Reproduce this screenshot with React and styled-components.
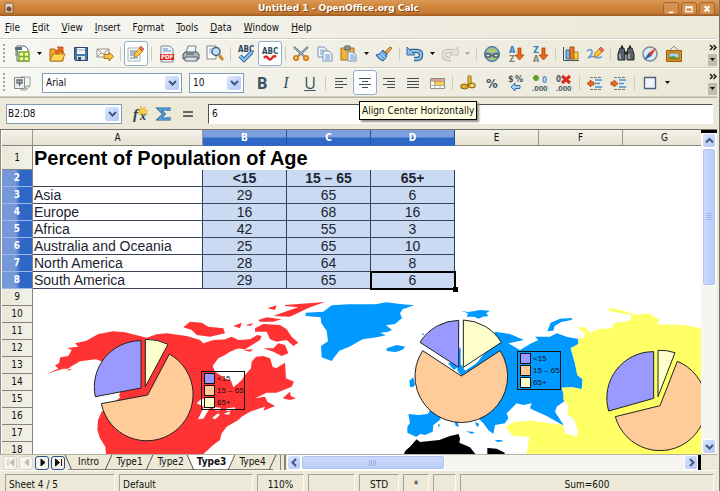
import React, { useState } from 'react';
import styled, { createGlobalStyle } from 'styled-components';

const GlobalStyle = createGlobalStyle`
  * { box-sizing: border-box; }
  body { margin: 0; }
  button, input, select { font: inherit; color: inherit; }
`;

const Window = styled.div`
  display: flex;
  flex-direction: column;
  height: 100vh;
  padding-right: 2px;
  border-right: 1px solid #77766e;
  background: #ece9d8;
  color: #111;
  font-family: 'DejaVu Sans Condensed', 'DejaVu Sans', sans-serif;
  font-size: 10px;
  line-height: 14px;
  overflow: hidden;
`;

const TitleBar = styled.header`
  display: flex;
  align-items: center;
  flex: none;
  height: 16px;
  margin-right: -2px;
  padding: 0 4px;
  background: linear-gradient(#dc9a58, #cf863c 40%, #c87c33 80%, #9a5a20);
  color: #fff;
`;

const Title = styled.h1`
  flex: 1;
  margin: 0;
  text-align: center;
  font-family: 'DejaVu Sans', sans-serif;
  font-size: 9px;
  line-height: 14px;
  font-weight: bold;
  text-shadow: 1px 1px 1px #6e4014;
`;

const TitleButtons = styled.div`
  display: flex;
  gap: 2px;
`;

const TitleButton = styled.button`
  display: flex;
  width: 16px;
  height: 13px;
  padding: 0;
  border: 1px solid #a5662c;
  border-radius: 3px;
  background: #d3904e;
`;

const MenuBar = styled.nav`
  display: flex;
  flex: none;
  gap: 12px;
  height: 23px;
  padding: 5px 5px 0;
  background: linear-gradient(90deg, #f7f7f5, #eeece0 60%, #ece9d8);
  border-bottom: 1px solid #d2cfc0;
`;

const MenuItem = styled.button`
  padding: 0;
  border: none;
  background: none;
  line-height: 14px;
  height: 14px;
`;

const Bar = styled.div`
  display: flex;
  align-items: center;
  flex: none;
  height: 29px;
  padding-left: 3px;
  background: linear-gradient(90deg, #f7f7f3, #efede2 60%, #ece9d8);
  border-top: 1px solid #fff;
  border-bottom: 1px solid #d0cdbe;
`;

const Handle = styled.span`
  width: 2px;
  height: 20px;
  margin-right: 5px;
  background: repeating-linear-gradient(#a9a79b 0 2px, transparent 2px 4px);
`;

const ToolButton = styled.button`
  display: flex;
  align-items: center;
  justify-content: center;
  flex: none;
  width: 24px;
  height: 25px;
  padding: 0;
  border: 1px solid ${p => (p.$active ? '#8eb0cc' : 'transparent')};
  border-radius: 3px;
  background: ${p => (p.$active ? '#fff' : 'none')};
`;

const Letter = styled.span`
  color: #3a5462;
  font-family: ${p => p.$font || "'Open Sans', sans-serif"};
  font-size: 16px;
  line-height: 22px;
  font-weight: ${p => (p.$bold ? 'bold' : 'normal')};
  font-style: ${p => (p.$italic ? 'italic' : 'normal')};
  text-decoration: ${p => (p.$underline ? 'underline' : 'none')};
`;

const DropButton = styled.button`
  display: flex;
  align-items: center;
  justify-content: center;
  width: 11px;
  height: 24px;
  padding: 0;
  border: none;
  background: none;
`;

const Separator = styled.span`
  width: 1px;
  height: 14px;
  margin: 0 3px;
  background: #cfccbd;
`;

const Overflow = styled.div`
  display: flex;
  flex-direction: column;
  align-items: center;
  justify-content: space-between;
  width: 9px;
  height: 25px;
  margin-left: auto;
`;

const OverflowButton = styled.button`
  display: flex;
  align-items: center;
  justify-content: center;
  width: 9px;
  height: 12px;
  padding: 0;
  border: none;
  background: ${p => (p.$filled ? '#bebbb0' : 'none')};
`;

const Combo = styled.div`
  display: flex;
  align-items: center;
  position: relative;
  width: ${p => p.$width};
  height: 20px;
  margin: ${p => p.$margin || '0'};
  border: 1px solid #7f9db9;
  background: #fff;
`;

const ComboField = styled.select`
  appearance: none;
  width: 100%;
  height: 18px;
  padding: 0 18px 0 3px;
  border: none;
  outline: none;
  background: none;
`;

const NameField = styled(ComboField).attrs({ as: 'input' })`
  padding: 0 0 0 1px;
`;

const ComboArrow = styled.span`
  position: absolute;
  right: 2px;
  display: flex;
  align-items: center;
  justify-content: center;
  width: 14px;
  height: 14px;
  border-radius: 2px;
  background: linear-gradient(135deg, #dce7ff, #b4c8f6);
  pointer-events: none;
`;

const FormulaBar = styled.div`
  display: flex;
  align-items: center;
  flex: none;
  height: 32px;
  padding: 0 4px 0 6px;
  border-top: 1px solid #b9b6a6;
  background: #ece9d8;
`;

const FormulaInput = styled.input`
  flex: 1;
  min-width: 0;
  height: 20px;
  margin-left: 8px;
  padding: 0 3px;
  border: 1px solid #fff;
  border-top-color: #55544f;
  border-left-color: #55544f;
  background: #fff;
  outline: none;
`;

const Tooltip = styled.div`
  position: absolute;
  z-index: 5;
  top: 31px;
  left: 6px;
  padding: 1px 2px;
  border: 1px solid #000;
  background: #ffffe1;
  box-shadow: 2px 2px 2px #8f8e84;
  white-space: nowrap;
  line-height: 15px;
`;

const TooltipAnchor = styled.span`
  position: relative;
  display: flex;
`;

const Workspace = styled.main`
  display: flex;
  flex: 1;
  min-height: 0;
  border-top: 1px solid #77756b;
`;

const SheetView = styled.div`
  position: relative;
  flex: 1;
  min-width: 0;
  overflow: hidden;
  padding-left: 1px;
  background: #fff;
  border-left: 1px solid #8d8b80;
`;

const Grid = styled.table`
  width: 705px;
  table-layout: fixed;
  border-collapse: separate;
  border-spacing: 0;
  font-family: 'Liberation Sans', Arial, sans-serif;
  font-size: 14px;
  line-height: 15px;
`;

const ColumnHead = styled.th`
  height: 16px;
  padding: 0;
  border-right: 1px solid ${p => (p.$selected ? '#24529f' : '#9b998d')};
  border-bottom: 1px solid ${p => (p.$selected ? '#316ac5' : '#85837a')};
  background: ${p => (p.$selected ? 'linear-gradient(#7e9fdd 45%, #2f67c6 55%)' : 'linear-gradient(#f3f2ea, #e6e3d3)')};
  color: ${p => (p.$selected ? '#fff' : '#111')};
  font-family: 'DejaVu Sans Condensed', sans-serif;
  font-size: 10px;
  line-height: 14px;
  font-weight: ${p => (p.$selected ? 'bold' : 'normal')};
`;

const RowHead = styled(ColumnHead)`
  height: ${p => p.$height || 17}px;
  border-right-color: #85837a;
  border-bottom-color: ${p => (p.$selected ? '#9db9e6' : '#85837a')};
  background: ${p => (p.$selected ? 'linear-gradient(90deg, #7599d8 45%, #2f67c6 60%)' : 'linear-gradient(90deg, #e9e6d8, #f3f2ea)')};
`;

const Cell = styled.td`
  height: 17px;
  padding: 0 1px;
  overflow: hidden;
  white-space: nowrap;
  border-right: 1px solid ${p => (p.$plain ? 'transparent' : '#2c3f63')};
  border-bottom: 1px solid ${p => (p.$plain ? 'transparent' : '#3a4457')};
  background: ${p => (p.$selected ? '#cadaf3' : '#fff')};
  text-align: ${p => (p.$selected ? 'center' : 'left')};
  font-weight: ${p => (p.$bold ? 'bold' : 'normal')};
  color: #1c2430;
`;

const CursorCell = styled(Cell)`
  position: relative;
  overflow: visible;
  outline: 2px solid #000;
  outline-offset: -1px;

  &::after {
    content: '';
    position: absolute;
    right: -4px;
    bottom: -4px;
    width: 5px;
    height: 5px;
    background: #000;
  }
`;

const HeadingCell = styled(Cell)`
  height: 24px;
  font-size: 20px;
  line-height: 22px;
  font-weight: bold;
  color: #000;
`;

const Drawing = styled.svg`
  position: absolute;
  left: 32px;
  top: 160px;
`;

const Legend = styled.ul`
  position: absolute;
  left: ${p => p.$x}px;
  top: ${p => p.$y}px;
  display: flex;
  flex-direction: column;
  justify-content: space-around;
  width: 44px;
  height: 39px;
  margin: 0;
  padding: 1px 2px;
  border: 1px solid #111;
  list-style: none;
  font-family: 'Liberation Sans', Arial, sans-serif;
  font-size: 8px;
  line-height: 9px;
`;

const LegendItem = styled.li`
  display: flex;
  align-items: center;
  gap: 2px;
  white-space: nowrap;

  &::before {
    content: '';
    flex: none;
    width: 9px;
    height: 9px;
    border: 1px solid #111;
    background: ${p => p.$color};
  }
`;

const VScroll = styled.div`
  display: flex;
  flex-direction: column;
  flex: none;
  width: 16px;
  padding: 0 1px;
  border-top: 3px solid #000;
  background: #f6f5f1;
`;

const ScrollButton = styled.button`
  display: flex;
  align-items: center;
  justify-content: center;
  flex: none;
  width: 14px;
  height: 15px;
  padding: 0;
  border: 1px solid #fff;
  border-radius: 3px;
  background: linear-gradient(135deg, #d7e2fd, #b4c8f6);
`;

const Thumb = styled.div`
  display: flex;
  align-items: center;
  justify-content: center;
  flex: ${p => p.$grow};
  border: 1px solid #fff;
  border-radius: 3px;
  background: linear-gradient(${p => (p.$vertical ? '90deg' : '180deg')}, #cbdafd, #b9cbf8);
  box-shadow: inset 0 0 0 1px #b2c4ee;
`;

const Track = styled.div`
  flex: ${p => p.$grow};
`;

const TabRow = styled.div`
  display: flex;
  align-items: stretch;
  flex: none;
  height: 16px;
  border-top: 1px solid #b5b2a4;
  background: #ece9d8;
`;

const TabNav = styled.div`
  display: flex;
  align-items: center;
  gap: 2px;
  padding: 0 3px 0 3px;
`;

const NavButton = styled.button`
  display: flex;
  align-items: center;
  justify-content: center;
  width: 14px;
  height: 14px;
  padding: 0;
  border: 1px solid ${p => (p.disabled ? '#d8d5c7' : '#2b4f83')};
  border-radius: 3px;
  background: #f4f3ee;
`;

const Tabs = styled.div`
  display: flex;
  flex: none;
  padding-right: 7px;
  border-right: 1px solid #85837a;
`;

const Tab = styled.button`
  position: relative;
  z-index: ${p => (p.$active ? 0 : 1)};
  width: 41px;
  height: 15px;
  padding: 0;
  border: none;
  border-bottom: 1px solid #85837a;
  background: none;
  line-height: 14px;
  font-weight: ${p => (p.$active ? 'bold' : 'normal')};

  &::before {
    content: '';
    position: absolute;
    z-index: -1;
    inset: 0 -3px;
    background: ${p => (p.$active ? '#fff' : 'none')};
    clip-path: polygon(0 0, 100% 0, calc(100% - 6px) 100%, 6px 100%);
  }

  &::after {
    content: '';
    position: absolute;
    top: 0;
    right: 0;
    height: 15px;
    border-right: 1px solid #55534c;
    transform: skewX(${p => (p.$beforeActive ? '24deg' : '-24deg')});
  }
`;

const TabEdge = styled.span`
  width: 1px;
  height: 15px;
  margin: 0 -1px 0 0;
  z-index: 1;
  background: #55534c;
  transform: skewX(24deg);
`;

const Splitter = styled.div`
  width: 5px;
  margin: 0 1px 0 0;
  border-right: 2px solid #85837a;
`;

const HScroll = styled.div`
  display: flex;
  flex: 1;
  min-width: 0;
  background: #f6f5f1;
  border-right: 3px solid #000;
`;

const Corner = styled.div`
  width: 16px;
`;

const StatusBar = styled.footer`
  display: flex;
  flex: none;
  gap: 4px;
  height: 21px;
  padding: 3px 3px 0 5px;
  border-top: 1px solid #fbfaf6;
`;

const StatusField = styled.div`
  flex: ${p => `${p.$size} 1 ${p.$size}px`};
  padding: 3px 3px 0;
  border: 1px solid #fbfaf5;
  border-top-color: #a5a294;
  border-left-color: #a5a294;
  border-bottom: none;
  text-align: ${p => (p.$center ? 'center' : 'left')};
  white-space: nowrap;
`;

const Svg = ({ size = 18, children }) => (
    <svg width={size} height={size} viewBox="0 0 18 18" fill="none" aria-hidden="true">{children}</svg>
);

const Chevron = ({ dir = 'down' }) => {
    const paths = {
        down: 'M1 3l3.5 3.5L8 3',
        up: 'M1 6.5L4.500 3 8 6.500',
        left: 'M6 1L2.500 4.500 6 8',
        right: 'M3 1l3.500 3.500L3 8',
    };
    return <svg width="9" height="9" viewBox="0 0 9 9" aria-hidden="true"><path d={paths[dir]} fill="none" stroke="#41587f" strokeWidth="2" /></svg>;
};

const Triangle = ({ color = '#111' }) => (
    <svg width="5" height="4" viewBox="0 0 5 4" aria-hidden="true"><path d="M0 0h5L2.500 3z" fill={color} /></svg>
);

const More = () => (
    <svg width="8" height="7" viewBox="0 0 8 7" aria-hidden="true"><path d="M1 1l2.500 2.500L1 6M4.500 1L7 3.500 4.500 6" fill="none" stroke="#111" strokeWidth="1.400" /></svg>
);

const iconFont = { fontFamily: 'DejaVu Sans Condensed', fontWeight: 'bold' };

const icons = {
    new: <><path d="M4 1h8l3 3v12H4z" fill="#fff" stroke="#62696b" /><path d="M2 2h7v3H2z" fill="#4f6e80" /><path d="M3 3h5M2 6h3M2 8h3M2 10h3" stroke="#5f7a88" /><path d="M6 7h10v9H6z" fill="#f8ffa0" stroke="#78a82c" strokeWidth="1.500" /><path d="M6 11.500h10M11 7v9" stroke="#78a82c" strokeWidth="1.500" /></>,
    open: <><path d="M2 16V4h5l1 2h7v10z" fill="#f0a52c" stroke="#b26b10" /><path d="M2 16l3-7h12l-3 7z" fill="#ffd65c" stroke="#b9781a" /><path d="M7 7l4-4-2-1h6v6l-2-2-4 3z" fill="#ee6a1a" stroke="#a53c08" strokeWidth=".7" /></>,
    save: <><path d="M2.500 2.500h13v13h-12l-1-1z" fill="#4679a6" stroke="#274a6c" /><path d="M5 3h8v6H5z" fill="#f2f6fa" /><path d="M5 5h8" stroke="#9ab4cc" /><path d="M5 11h8v4H5z" fill="#d7dde2" /><path d="M6 12h3v3H6z" fill="#35526d" /></>,
    mail: <><path d="M1 4h12v8H1z" fill="#fbfaf2" stroke="#95938a" /><path d="M1 4l6 5 6-5M1 12l4-4M13 12L9 8" stroke="#95938a" /><path d="M8 9.500h5V7l4.500 4.500L13 16v-2.500H8z" fill="#fbc343" stroke="#ad7410" /></>,
    edit: <><path d="M1 3h12v13H1z" fill="#f9fbfd" stroke="#a5b2bb" /><path d="M3 6h7M3 8h6M3 10h5M3 13h8" stroke="#5b7c95" /><path d="M7 12l1-4 5-5 3 3-5 5z" fill="#fbc63c" stroke="#a9741a" strokeWidth=".8" /><path d="M12 3l2-2 3 3-2 2z" fill="#ef6b5b" stroke="#b23b2b" strokeWidth=".6" /></>,
    pdf: <><path d="M3 1h9l3 3v13H3z" fill="#eff4f8" stroke="#7b8a94" /><path d="M5 4h5M5 6h8" stroke="#5a8fc0" /><rect x="2" y="9" width="14" height="6" fill="#dc2418" /><text x="3" y="14" fontSize="6" fill="#fff" style={iconFont}>PDF</text></>,
    print: <><path d="M6 1h8l-1 7H4z" fill="#f2f7fb" stroke="#758490" /><path d="M1 9l2-2h12l2 2v5H1z" fill="#a9b4bb" stroke="#4b565c" /><path d="M3 12h12v4H3z" fill="#dbe1e4" stroke="#5b666c" /><path d="M4 9h8" stroke="#4b565c" /></>,
    preview: <><path d="M1 1h9v13H1z" fill="#fff" stroke="#78858d" /><path d="M3 4h5M3 6h3M3 8h3" stroke="#8cb3d6" /><circle cx="10" cy="6.500" r="4" fill="#bfe0f8" stroke="#4a6478" strokeWidth="1.500" /><path d="M13 10l4 5" stroke="#d08a2c" strokeWidth="3" /></>,
    spell: <><text x="1" y="7" fontSize="8" fill="#2d4a5c" style={iconFont}>ABC</text><path d="M3 11l4 4 8-8" stroke="#24649c" strokeWidth="4" /><path d="M3 11l4 4 8-8" stroke="#8dc4ee" strokeWidth="2" /></>,
    autospell: <><text x="1" y="9" fontSize="8" fill="#2d4a5c" style={iconFont}>ABC</text><path d="M3 13q2-3 4 0t4 0 4-1" stroke="#e02a20" strokeWidth="2.500" /></>,
    cut: <><path d="M2 2l11 10M16 2L5 12" stroke="#5d686e" strokeWidth="2.200" /><path d="M2.500 2.500l10 9M15.500 2.500l-10 9" stroke="#cdd6da" strokeWidth=".8" /><circle cx="4" cy="13" r="2" stroke="#dc8018" strokeWidth="2.200" /><circle cx="14" cy="13" r="2" stroke="#dc8018" strokeWidth="2.200" /></>,
    copy: <><path d="M2 2h6l3 3v7H2z" fill="#f4f8fd" stroke="#7390b4" /><path d="M4 5h4M4 7h5M4 9h5" stroke="#7fa6d4" /><path d="M7 6h6l3 3v7H7z" fill="#f4f8fd" stroke="#7390b4" /><path d="M9 10h5M9 12h5M9 14h5" stroke="#5e90cc" /></>,
    paste: <><path d="M1 3h13v12H1z" fill="#f3b23c" stroke="#a76c14" /><path d="M5 1h5v4H5z" fill="#8d9ba3" stroke="#56626a" /><path d="M8 7h5l3 3v6H8z" fill="#f4f8fd" stroke="#7390b4" /><path d="M10 10h4M10 12h5M10 14h5" stroke="#5e90cc" /></>,
    brush: <><path d="M10 7l5-5 2 1-5 6z" fill="#f5a93a" stroke="#a86912" /><path d="M8 5l4 5q-1 4-4 6-4-1-7-6 4 0 7-5z" fill="#6aa6e0" stroke="#285f9c" /><path d="M4 10l3 4M6 8l4 5" stroke="#d6eafc" /></>,
    undo: <><path d="M4 6h7q4 0 4 4t-4 4H8" stroke="#35679c" strokeWidth="4.500" /><path d="M1 2v8h8z" fill="#8fbde8" stroke="#35679c" /><path d="M5 6h6q4 0 4 4t-4 4H8" stroke="#8fbde8" strokeWidth="2.200" /></>,
    redo: <><path d="M13 6H7q-4 0-4 4t4 4h3" stroke="#c4c3bb" strokeWidth="4.500" /><path d="M17 2v8H9z" fill="#e7e6dd" stroke="#c4c3bb" /><path d="M13 6H7q-4 0-4 4t4 4h3" stroke="#e7e6dd" strokeWidth="2.200" /></>,
    link: <><circle cx="9" cy="9" r="7.500" fill="#6aa0cf" stroke="#4b7088" /><path d="M3 6q6-6 12 0l-4 2H7zM4 13q5 4 10 0l-3-1H7z" fill="#b3c66c" /><path d="M3 9h4v3H3zM11 9h4v3h-4z" fill="#eef2df" stroke="#4f606b" strokeWidth="1.300" /><path d="M7 10.500h4" stroke="#4f606b" strokeWidth="1.500" /></>,
    sortAsc: <><text x="2" y="8" fontSize="9" fill="#3480c8" style={iconFont}>A</text><text x="2" y="17" fontSize="9" fill="#84857f" style={iconFont}>Z</text><path d="M11 3h3v7h3l-4.500 5L8 10h3z" fill="#ec6a1c" stroke="#ab3d08" strokeWidth=".8" /></>,
    sortDesc: <><text x="2" y="8" fontSize="9" fill="#3480c8" style={iconFont}>Z</text><text x="2" y="17" fontSize="9" fill="#84857f" style={iconFont}>A</text><path d="M11 3h3v7h3l-4.500 5L8 10h3z" fill="#ec6a1c" stroke="#ab3d08" strokeWidth=".8" /></>,
    chart: <><path d="M1.500 2v13.500H17" stroke="#42505c" /><path d="M4 5h4v9H4z" fill="#7fb5e6" stroke="#2f6497" /><path d="M8 2h4v12H8z" fill="#ee7b2b" stroke="#a84a0c" /><path d="M12 7h4v7h-4z" fill="#fbd44c" stroke="#a8820c" /></>,
    draw: <><path d="M1 6q4-3 5 0t-4 7q6-3 9 0l5-1" stroke="#5f9be0" strokeWidth="1.600" /><path d="M8 12l1-4 5-5 3 3-5 5z" fill="#fbc63c" stroke="#a9741a" strokeWidth=".8" /><path d="M13 4l2-2 3 3-2 2z" fill="#ef6b5b" stroke="#b23b2b" strokeWidth=".6" /></>,
    find: <><path d="M3 3h4l1 5v7H1V9zM11 3h4l2 6v6h-7V8z" fill="#596067" stroke="#24292d" /><path d="M4 2h2M12 2h2M7 8h4" stroke="#24292d" strokeWidth="3" /><path d="M3 9v5M12 9v5" stroke="#b4bcc2" strokeWidth="1.500" /></>,
    compass: <><circle cx="9" cy="9" r="7" fill="#dcebf8" stroke="#7c8c9a" strokeWidth="1.500" /><path d="M15 3l-4.500 8-3-3z" fill="#e23a28" /><path d="M3 15l4.500-7 3 3z" fill="#2c5f9c" /></>,
    gallery: <><path d="M5 5l4-4 4 4" stroke="#8b8b84" /><path d="M1.500 5.500h15v11h-15z" fill="#d98d22" stroke="#9c5c0c" /><path d="M4 8h10v6H4z" fill="#9fd2f4" stroke="#8d5a10" strokeWidth=".7" /><path d="M4 14v-2l4-1 6 2v1z" fill="#5d9a34" /></>,
    styles: <><path d="M8 3h9v9l-4 4H8z" fill="#f3f3f0" stroke="#9a9d9f" /><path d="M17 12h-4v4" stroke="#9a9d9f" /><path d="M1.500 3.500h10v11h-10z" fill="#eceeef" stroke="#858b8f" /><path d="M4 6h5v3H4zM6.500 6v6" stroke="#5d676e" strokeWidth="1.300" /></>,
    currency: <><path d="M9 2q4-1 3 2v8H9z" fill="#f0bd38" stroke="#99700f" /><path d="M2 11q3-2 7 0v3q-4 2-7 0z" fill="#e7a92b" stroke="#865c0a" /><path d="M10 10q4-2 6 0v3q-3 2-6 0z" fill="#f7d264" stroke="#865c0a" /></>,
    percent: <text x="3" y="14" fontSize="13" fill="#405662" style={iconFont}>%</text>,
    standard: <><text x="1" y="8" fontSize="9" fill="#405662" style={iconFont}>$</text><text x="8" y="8" fontSize="9" fill="#405662" style={iconFont}>%</text><path d="M4 13l4-4v2.500h5v3H8V17z" fill="#a7d0f4" stroke="#2f70ac" /></>,
    addDecimal: <><path d="M2 4h6M5 1v6" stroke="#5d9e22" strokeWidth="3" /><text x="11" y="9" fontSize="8" fill="#4f93dc" style={iconFont}>0</text><text x="1" y="17" fontSize="8" fill="#405662" style={{ fontFamily: 'Liberation Sans', fontWeight: 'bold' }}>.000</text></>,
    delDecimal: <><text x="1" y="8" fontSize="8" fill="#405662" style={iconFont}>0</text><text x="1" y="17" fontSize="8" fill="#405662" style={{ fontFamily: 'Liberation Sans', fontWeight: 'bold' }}>.000</text><path d="M7 2l8 7M15 2L7 9" stroke="#d92a1c" strokeWidth="3" /></>,
    outdent: <><path d="M4 3.500h12M4 15.500h12" stroke="#6d787e" strokeDasharray="3 1" /><path d="M9 6h7M9 9.500h5M9 13h7" stroke="#4596d8" strokeWidth="1.600" /><path d="M1 9.500l4-3.500v2h3v3H5v2z" fill="#ec6a1c" stroke="#a23d0b" strokeWidth=".7" /></>,
    indent: <><path d="M4 3.500h12M4 15.500h12" stroke="#6d787e" strokeDasharray="3 1" /><path d="M9 6h7M9 9.500h5M9 13h7" stroke="#4596d8" strokeWidth="1.600" /><path d="M8 9.500L4 6v2H1v3h3v2z" fill="#ec6a1c" stroke="#a23d0b" strokeWidth=".7" /></>,
    borders: <path d="M3.500 3.500h11v11h-11z" fill="#f1f5fb" stroke="#4d6480" strokeWidth="1.400" />,
    left: <path d="M3 4.500h12M3 7.500h8M3 10.500h12M3 13.500h8" stroke="#444c50" strokeWidth="1.200" />,
    center: <path d="M3 4.500h12M6 7.500h6M3 10.500h12M6 13.500h6" stroke="#444c50" strokeWidth="1.200" />,
    right: <path d="M3 4.500h12M7 7.500h8M3 10.500h12M7 13.500h8" stroke="#444c50" strokeWidth="1.200" />,
    justify: <path d="M3 4.500h12M3 7.500h12M3 10.500h12M3 13.500h12" stroke="#444c50" strokeWidth="1.200" />,
    merge: <><path d="M2.500 4.500h14v10h-14z" fill="#fff" stroke="#8b8f93" /><path d="M3 5h13v2H3z" fill="#efa184" /><path d="M6 7h10v4H6z" fill="#fbd144" /><path d="M2 7.500h15M2 11.500h15M7 5v10M12 5v2M12 11v4" stroke="#95999c" strokeWidth=".8" /></>,
    fx: <><path d="M10 1l1 3 3-2-1 3h4l-3 2 3 2H7z" fill="#f8cf4a" stroke="#dcae28" strokeWidth=".6" /><text x="2" y="14" fontSize="15" fill="#28414f" style={{ fontFamily: 'Liberation Serif', fontStyle: 'italic', fontWeight: 'bold' }}>f</text><text x="9" y="15" fontSize="12" fill="#28414f" style={{ fontFamily: 'Liberation Serif', fontStyle: 'italic', fontWeight: 'bold' }}>x</text></>,
    sum: <><path d="M14 6V4H4l5 5-5 5h10v-2" stroke="#1d5a96" strokeWidth="3" /><path d="M14 6V4H4l5 5-5 5h10v-2" stroke="#5eabea" strokeWidth="1.400" /></>,
    equals: <path d="M4 7h10M4 11h10" stroke="#64686a" strokeWidth="2" />,
};

const letters = {
    bold: <Letter $bold>B</Letter>,
    italic: <Letter $font="'Liberation Serif', serif" $italic>I</Letter>,
    underline: <Letter $underline>U</Letter>,
};

const standardBar = [
    ['new', 'New', 'drop'], ['open', 'Open'], ['save', 'Save'], ['mail', 'Document as E-mail'], '|',
    ['edit', 'Edit File', 'on'], '|',
    ['pdf', 'Export as PDF'], ['print', 'Print'], ['preview', 'Page Preview'], '|',
    ['spell', 'Spellcheck'], ['autospell', 'AutoSpellcheck', 'on'], '|',
    ['cut', 'Cut'], ['copy', 'Copy'], ['paste', 'Paste', 'drop'], ['brush', 'Format Paintbrush'], '|',
    ['undo', 'Undo', 'drop'], ['redo', 'Redo', 'dropOff'], '|',
    ['link', 'Hyperlink'], ['sortAsc', 'Sort Ascending'], ['sortDesc', 'Sort Descending'], '|',
    ['chart', 'Insert Chart'], ['draw', 'Show Draw Functions'], '|',
    ['find', 'Find & Replace'], ['compass', 'Navigator'], ['gallery', 'Gallery'],
];

const formatBar = [
    ['bold', 'Bold'], ['italic', 'Italic'], ['underline', 'Underline'], '|',
    ['left', 'Align Left'], ['center', 'Align Center Horizontally', 'tip'], ['right', 'Align Right'], ['justify', 'Justified'], ['merge', 'Merge Cells'], '|',
    ['currency', 'Number Format: Currency'], ['percent', 'Number Format: Percent'], ['standard', 'Number Format: Standard'], ['addDecimal', 'Add Decimal Place'], ['delDecimal', 'Delete Decimal Place'], '|',
    ['outdent', 'Decrease Indent'], ['indent', 'Increase Indent'], '|',
    ['borders', 'Borders', 'drop'],
];

const Tools = ({ items }) => items.map((item, index) => {
    if (item === '|') {
        return <Separator key={index} />;
    }
    const [name, label, mode] = item;
    return (
        <React.Fragment key={name}>
            <TooltipAnchor>
                <ToolButton type="button" aria-label={label} $active={mode === 'on' || mode === 'tip'}>
                    {letters[name] || <Svg>{icons[name]}</Svg>}
                </ToolButton>
                {mode === 'tip' && <Tooltip role="tooltip">{label}</Tooltip>}
            </TooltipAnchor>
            {mode?.startsWith('drop') && (
                <DropButton type="button" aria-label={`${label} options`}><Triangle color={mode === 'dropOff' ? '#aaa89c' : '#111'} /></DropButton>
            )}
        </React.Fragment>
    );
});

const BarOverflow = () => (
    <Overflow>
        <OverflowButton type="button" aria-label="More controls"><More /></OverflowButton>
        <OverflowButton type="button" aria-label="Toolbar menu" $filled><Triangle /></OverflowButton>
    </Overflow>
);

const menus = ['File', 'Edit', 'View', 'Insert', 'Format', 'Tools', 'Data', 'Window', 'Help'];
const accessKeys = { Format: 1 };

const MenuLabel = ({ text }) => {
    const at = accessKeys[text] || 0;
    return <>{text.slice(0, at)}<u>{text[at]}</u>{text.slice(at + 1)}</>;
};

const columns = ['A', 'B', 'C', 'D', 'E', 'F', 'G'];
const rows = [
    ['', '<15', '15 – 65', '65+'],
    ['Asia', 29, 65, 6],
    ['Europe', 16, 68, 16],
    ['Africa', 42, 55, 3],
    ['Australia and Oceania', 25, 65, 10],
    ['North America', 28, 64, 8],
    ['South America', 29, 65, 6],
];
const emptyRows = [9, 10, 11, 12, 13, 14, 15, 16, 17, 18];

const series = [['<15', '#9999ff'], ['15 – 65', '#ffcc99'], ['65+', '#ffffcc']];

// apex, start and end point of every slice, clockwise
const pies = [
    [['#9999ff', 423, 294, 286, 320, 423, 152], ['#ffffcc', 436, 290, 436, 148, 504, 163], ['#ffcc99', 443, 315, 508, 192, 304, 341]],
    [['#9999ff', 1376, 232, 1260, 157, 1376, 91], ['#ffffcc', 1390, 232, 1390, 90, 1504, 157], ['#ffcc99', 1384, 258, 1500, 182, 1268, 182]],
    [['#9999ff', 1961, 325, 1826, 363, 1961, 185], ['#ffffcc', 1974, 320, 1974, 181, 2025, 188], ['#ffcc99', 1980, 347, 2032, 214, 1846, 380]],
];

const Map = () => (
    <Drawing width="668" height="164" viewBox="99 0 2004 492" role="img" aria-label="World map with population charts">
        <g fill="#ff3333">
            <path d="M138 252L175 236 165 226 177 220 181 202 205 198 215 180 201 174 235 170 225 160 259 152 295 132 340 124 375 127 405 134 440 143 470 133 500 130 560 138 600 150 610 160 640 150 685 148 695 155 720 158 715 175 690 185 675 195 655 205 638 228 645 245 675 265 693 272 700 292 715 280 725 270 735 255 753 235 755 215 768 200 790 198 810 205 818 230 828 235 855 218 858 265 882 275 875 290 830 308 800 308 765 325 795 320 802 335 825 348 790 362 795 350 750 365 725 380 715 390 680 410 665 430 660 450 640 465 610 492 318 492 316 470 300 445 292 420 294 390 305 365 330 345 350 330 360 310 340 230 300 212 288 208 240 214 212 230 205 236 190 236z" />
            <path d="M550 112L570 95 605 98 625 110 670 115 675 130 630 140 590 135 575 120zM700 108L725 98 720 115zM675 148L695 140 715 150 750 148 772 135 785 138 780 150 735 178 712 175zM765 115L790 102 840 105 860 118 875 140 895 158 880 168 860 150 830 155 810 148 800 125 765 125zM775 90L800 82 845 88 820 95 780 95zM802 55L830 46 825 60zM855 45L975 36 930 52 870 80 820 78 855 65 895 52 855 48zM790 175L820 175 835 160 855 165 865 190 845 198 820 185zM728 180L760 178 750 185zM736 105L760 100 752 108zM848 325L870 305 872 318 888 325 870 330z" />
            <path d="M198 242l14-6 2 4z" />
        </g>
        <g fill="#fff">
            <path d="M590 340L604 326 640 330 632 350 610 386 594 388 612 350zM640 350L664 354 656 362 640 360zM636 384L654 370 660 374 646 388zM670 372L690 364 688 374zM676 356L704 352 706 358 680 364z" />
            <path d="M335 308l18 4 8 10-10 8-12-4z" />
        </g>
        <g fill="#0099ff">
            <path d="M917 68L970 65 995 46 1045 43 1125 43 1160 37 1200 42 1242 46 1208 58 1200 70 1206 84 1185 102 1158 106 1176 120 1162 126 1140 128 1158 136 1130 142 1088 148 1048 170 1018 182 1004 200 995 213 965 202 963 168 984 154 980 122 964 100 962 82 917 78zM1160 175L1190 165 1216 170 1206 180 1186 186 1160 183zM1382 62L1402 66 1420 64 1440 60 1470 62 1458 70 1466 78 1448 80 1436 86 1422 80 1400 80 1404 70z" />
            <path d="M1228 272L1240 262 1245 285 1238 292 1230 290zM1225 372L1255 375 1284 372 1290 360 1320 375 1322 388 1300 405 1298 425 1275 435 1262 432 1248 440 1222 428 1222 410 1230 398zM1364 392L1374 398 1376 412 1366 406zM1398 424L1424 426 1416 432zM1314 402l6 2-4 10zM1424 395L1438 402 1432 412zM1485 125L1530 132 1572 150 1525 160 1560 180 1590 162 1615 150 1605 140 1650 140 1670 130 1700 140 1735 147 1735 162 1712 175 1725 220 1732 255 1748 268 1745 298 1718 292 1685 293 1690 310 1698 330 1670 350 1665 365 1692 407 1640 378 1600 360 1590 355 1595 340 1570 345 1550 340 1520 370 1525 385 1515 400 1485 405 1480 432 1465 420 1450 400 1435 385 1400 380 1400 260 1460 180zM1642 124L1652 98 1680 86 1718 84 1714 90 1684 96 1664 108 1660 122zM1484 450l20 0 6 4-18 2zM1268 128l4 6-6 2z" />
            <path d="M1374 180l8-8 0 50 14 20 44-30 20 4-38 34-34 12-16-20z" />
            <path d="M1344 220l20-6 8 18-10 8z" />
        </g>
        <path d="M1212 492L1216 482 1230 470 1250 448 1260 456 1318 450 1350 438 1376 432 1380 446 1378 458 1410 472 1426 492zM1462 474L1490 476 1514 488 1514 492 1462 492z" fill="#000" />
        <path d="M1515 410L1545 395 1600 392 1645 400 1690 405 1695 430 1730 440 1735 425 1720 385 1702 375 1705 345 1690 330 1690 310 1685 293 1718 292 1745 298 1748 268 1732 255 1725 220 1712 175 1735 162 1735 145 1750 145 1755 130 1732 112 1755 112 1780 135 1792 148 1780 162 1775 145 1765 135 1790 118 1835 115 1840 100 1890 92 1895 75 1825 63 1830 53 1870 62 1910 75 1945 70 1980 90 1970 103 2050 105 2103 115 2103 492 1580 492 1588 440 1540 438z" fill="#ffff66" />
        {pies.map((slices, index) => (
            <g key={index} stroke="#222" strokeWidth="3" strokeLinejoin="round">
                {slices.map(([color, ax, ay, sx, sy, ex, ey]) => (
                    <path key={color} fill={color} d={`M${ax} ${ay}L${sx} ${sy}A139 139 0 ${color === '#ffcc99' ? 1 : 0} 1 ${ex} ${ey}z`} />
                ))}
            </g>
        ))}
    </Drawing>
);

const ChartLegend = ({ x, y }) => (
    <Legend $x={x} $y={y}>
        {series.map(([label, color]) => <LegendItem key={label} $color={color}>{label}</LegendItem>)}
    </Legend>
);

const Sheet = () => (
    <SheetView>
        <Grid>
            <colgroup>
                <col style={{ width: 31 }} />
                {columns.map((name) => <col key={name} style={{ width: name === 'A' ? 170 : 84 }} />)}
            </colgroup>
            <thead>
                <tr>
                    <ColumnHead aria-label="Select all" />
                    {columns.map((name) => <ColumnHead key={name} scope="col" $selected={'BCD'.includes(name)}>{name}</ColumnHead>)}
                </tr>
            </thead>
            <tbody>
                <tr>
                    <RowHead scope="row" $height={24}>1</RowHead>
                    <HeadingCell colSpan={7} $plain>Percent of Population of Age</HeadingCell>
                </tr>
                {rows.map((row, index) => (
                    <tr key={index}>
                        <RowHead scope="row" $selected>{index + 2}</RowHead>
                        {row.map((value, col) => {
                            const Part = index === 6 && col === 3 ? CursorCell : Cell;
                            return <Part key={col} $selected={col > 0} $bold={index === 0}>{value}</Part>;
                        })}
                    </tr>
                ))}
                {emptyRows.map((number) => (
                    <tr key={number}>
                        <RowHead scope="row">{number}</RowHead>
                        <Cell colSpan={7} $plain />
                    </tr>
                ))}
            </tbody>
        </Grid>
        <Map />
        <ChartLegend x={200} y={241} />
        <ChartLegend x={516} y={221} />
    </SheetView>
);

const navButtons = [
    ['First sheet', 'M2 1v7M8 1L4 4.500 8 8z', true],
    ['Previous sheet', 'M6.500 1L3 4.500 6.500 8z', true],
    ['Next sheet', 'M3 1l4 3.500L3 8z', false],
    ['Last sheet', 'M1.500 1l4 3.500-4 3.500zM7.500 1v7', false],
];

const sheets = ['Intro', 'Type1', 'Type2', 'Type3', 'Type4'];

const App = () => {
    const [sheet, setSheet] = useState('Type3');
    const [formula, setFormula] = useState('6');

    return (
        <Window>
            <GlobalStyle />
            <TitleBar>
                <svg width="10" height="12" viewBox="0 0 10 12" aria-hidden="true"><rect x="1" y="1" width="8" height="10" rx="1" fill="#ddd5c8" stroke="#8b5a2b" /><circle cx="5" cy="7" r="2.500" fill="#7b4a38" /></svg>
                <Title>Untitled 1 - OpenOffice.org Calc</Title>
                <TitleButtons>
                    <TitleButton type="button" aria-label="Minimize"><Svg size={14}><path d="M6 12h6" stroke="#fff" strokeWidth="2" /></Svg></TitleButton>
                    <TitleButton type="button" aria-label="Maximize"><Svg size={14}><path d="M5 5h8v6H5zM5 6h8" stroke="#fff" strokeWidth="1.500" /></Svg></TitleButton>
                    <TitleButton type="button" aria-label="Close"><Svg size={14}><path d="M6 4l6 7M12 4l-6 7" stroke="#fff" strokeWidth="2.500" /></Svg></TitleButton>
                </TitleButtons>
            </TitleBar>
            <MenuBar>
                {menus.map((text) => <MenuItem key={text} type="button"><MenuLabel text={text} /></MenuItem>)}
            </MenuBar>
            <Bar>
                <Handle />
                <Tools items={standardBar} />
                <BarOverflow />
            </Bar>
            <Bar>
                <Handle />
                <ToolButton type="button" aria-label="Styles and Formatting"><Svg>{icons.styles}</Svg></ToolButton>
                <Combo $width="140px" $margin="0 7px 0 8px">
                    <ComboField aria-label="Font name" defaultValue="Arial"><option>Arial</option></ComboField>
                    <ComboArrow><Chevron /></ComboArrow>
                </Combo>
                <Combo $width="55px" $margin="0 6px 0 0">
                    <ComboField aria-label="Font size" defaultValue="10"><option>10</option></ComboField>
                    <ComboArrow><Chevron /></ComboArrow>
                </Combo>
                <Tools items={formatBar} />
                <BarOverflow />
            </Bar>
            <FormulaBar>
                <Combo $width="116px" $margin="0 6px 0 0">
                    <NameField aria-label="Name box" defaultValue="B2:D8" />
                    <ComboArrow><Chevron /></ComboArrow>
                </Combo>
                <ToolButton type="button" aria-label="Function Wizard"><Svg>{icons.fx}</Svg></ToolButton>
                <ToolButton type="button" aria-label="Sum"><Svg>{icons.sum}</Svg></ToolButton>
                <ToolButton type="button" aria-label="Function"><Svg>{icons.equals}</Svg></ToolButton>
                <FormulaInput aria-label="Input line" value={formula} onChange={(e) => setFormula(e.target.value)} />
            </FormulaBar>
            <Workspace>
                <Sheet />
                <VScroll>
                    <ScrollButton type="button" aria-label="Scroll up"><Chevron dir="up" /></ScrollButton>
                    <Thumb $grow="136" $vertical><svg width="6" height="7" aria-hidden="true"><path d="M0 .5h6M0 2.500h6M0 4.500h6M0 6.500h6" stroke="#9db4e8" /></svg></Thumb>
                    <Track $grow="154" />
                    <ScrollButton type="button" aria-label="Scroll down"><Chevron /></ScrollButton>
                </VScroll>
            </Workspace>
            <TabRow>
                <TabNav>
                    {navButtons.map(([label, d, disabled]) => (
                        <NavButton key={label} type="button" aria-label={label} disabled={disabled}>
                            <svg width="9" height="9" viewBox="0 0 9 9" aria-hidden="true"><path d={d} fill={disabled ? '#c2c0b4' : '#111'} stroke={disabled ? '#c2c0b4' : '#111'} /></svg>
                        </NavButton>
                    ))}
                </TabNav>
                <Tabs role="tablist">
                    <TabEdge />
                    {sheets.map((name, index) => (
                        <Tab
                            key={name}
                            type="button"
                            role="tab"
                            aria-selected={sheet === name}
                            $active={sheet === name}
                            $beforeActive={sheets[index + 1] === sheet}
                            onClick={() => setSheet(name)}
                        >
                            {name}
                        </Tab>
                    ))}
                </Tabs>
                <Splitter />
                <HScroll>
                    <ScrollButton type="button" aria-label="Scroll left"><Chevron dir="left" /></ScrollButton>
                    <Thumb $grow="141"><svg width="7" height="6" aria-hidden="true"><path d="M.5 0v6M2.500 0v6M4.500 0v6M6.500 0v6" stroke="#9db4e8" /></svg></Thumb>
                    <Track $grow="238" />
                    <ScrollButton type="button" aria-label="Scroll right"><Chevron dir="right" /></ScrollButton>
                </HScroll>
                <Corner />
            </TabRow>
            <StatusBar>
                <StatusField $size={110}>Sheet 4 / 5</StatusField>
                <StatusField $size={134}>Default</StatusField>
                <StatusField $size={47} $center>110%</StatusField>
                <StatusField $size={47} />
                <StatusField $size={40} $center>STD</StatusField>
                <StatusField $size={26} $center>*</StatusField>
                <StatusField $size={23} />
                <StatusField $size={254} $center>Sum=600</StatusField>
            </StatusBar>
        </Window>
    );
};

export default App;
